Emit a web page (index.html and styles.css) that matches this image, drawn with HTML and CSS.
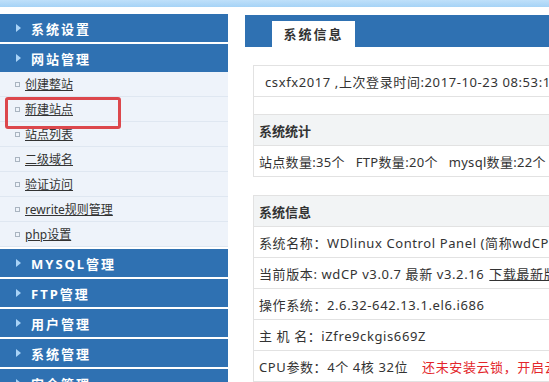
FILE: index.html
```html
<!DOCTYPE html>
<html lang="zh-CN">
<head>
    <meta charset="UTF-8">
    <title>wdCP 系统信息</title>
    <link rel="stylesheet" href="styles.css">
</head>
<body>
    <div class="top-strip"></div>

    <div class="page">
        <div class="sidebar">
            <div class="menu-title"><span class="arrow"></span>系统设置</div>
            <div class="menu-title"><span class="arrow"></span>网站管理</div>
            <ul class="submenu">
                <li><a href="#">创建整站</a></li>
                <li><a href="#">新建站点</a></li>
                <li><a href="#">站点列表</a></li>
                <li><a href="#">二级域名</a></li>
                <li><a href="#">验证访问</a></li>
                <li><a href="#">rewrite规则管理</a></li>
                <li><a href="#">php设置</a></li>
            </ul>
            <div class="menu-title"><span class="arrow"></span>MYSQL管理</div>
            <div class="menu-title"><span class="arrow"></span>FTP管理</div>
            <div class="menu-title"><span class="arrow"></span>用户管理</div>
            <div class="menu-title"><span class="arrow"></span>系统管理</div>
            <div class="menu-title"><span class="arrow"></span>安全管理</div>

            <!-- annotation box from the screenshot -->
            <div class="mark"></div>
        </div>

        <div class="main">
            <div class="tab-bar">
                <div class="tab">系统信息</div>
            </div>

            <div class="box">
                <div class="row login">csxfx2017 ,上次登录时间:2017-10-23 08:53:15</div>
                <div class="blank"></div>
                <div class="row head">系统统计</div>
                <div class="row last stats">站点数量:35个&nbsp;&nbsp; FTP数量:20个&nbsp;&nbsp; mysql数量:22个</div>
            </div>

            <div class="box">
                <div class="row head">系统信息</div>
                <div class="row">系统名称：WDlinux Control Panel (简称wdCP)</div>
                <div class="row">当前版本: wdCP v3.0.7 最新 v3.2.16 <a href="#">下载最新版</a></div>
                <div class="row">操作系统：2.6.32-642.13.1.el6.i686</div>
                <div class="row">主 机 名：iZfre9ckgis669Z</div>
                <div class="row last">CPU参数：4个 4核 32位 <span class="warn">还未安装云锁，开启云锁防护</span></div>
            </div>
        </div>
    </div>
</body>
</html>
```

FILE: styles.css
```css
body {
    margin: 0;
    font-family: "Noto Sans", "Noto Sans CJK SC", sans-serif;
    font-size: 13px;
    color: #333;
    background: #fff;
    overflow: hidden;
}
a {
    color: #333;
}

.top-strip {
    height: 7px;
    background: linear-gradient(#bfe0fa, #a6d3f6);
}

.page {
    display: flex;
    margin-top: 7px;
}

/* left menu */
.sidebar {
    position: relative;
    width: 228px;
    flex-shrink: 0;
}
.menu-title {
    display: flex;
    align-items: center;
    height: 28px;
    margin-top: 2px;
    padding-left: 16px;
    background: #2f71b2;
    color: #fff;
    font-weight: bold;
    font-size: 13px;
    letter-spacing: 2px;
}
.menu-title:first-child {
    margin-top: 0;
}
.arrow {
    width: 0;
    height: 0;
    margin-right: 10px;
    border-top: 4px solid transparent;
    border-bottom: 4px solid transparent;
    border-left: 5px solid #a9d3f7;
}
.submenu {
    list-style: none;
    margin: 0;
    padding: 0;
    background: #eef3fa;
}
.submenu li {
    display: flex;
    align-items: center;
    height: 24px;
    border-bottom: 1px solid #dfe7f1;
    padding-left: 15px;
    font-size: 12px;
}
.submenu li::before {
    content: "";
    width: 3px;
    height: 3px;
    margin-right: 5px;
    border: 1px solid #a9b4c0;
}
.submenu li a {
    color: #333;
}
.mark {
    position: absolute;
    left: 5px;
    top: 83px;
    width: 110px;
    height: 26px;
    border: 3px solid #dc474c;
    border-radius: 3px;
}

/* right side */
.main {
    width: 800px;
    flex-shrink: 0;
    margin-left: 17px;
    padding-top: 1px;
}
.tab-bar {
    height: 32px;
    background: #2f71b2;
    display: flex;
    align-items: flex-end;
}
.tab {
    width: 83px;
    height: 26px;
    margin-left: 27px;
    background: #fff;
    text-align: center;
    line-height: 26px;
    font-size: 13px;
    font-weight: bold;
    letter-spacing: 2px;
    color: #333;
}
.box {
    margin: 18px 0 0 8px;
    border: 1px solid #e2e2e2;
}
.row {
    display: flex;
    align-items: center;
    height: 30px;
    padding-left: 5px;
    border-bottom: 1px solid #e2e2e2;
    letter-spacing: 0.6px;
    white-space: nowrap;
}
.row.login {
    padding-left: 11px;
}
.row.stats {
    letter-spacing: 0.3px;
}
.row.last {
    border-bottom: none;
}
.row.head {
    background: #f2f4f5;
    font-weight: bold;
    letter-spacing: 0;
}
.row a {
    margin-left: 5px;
}
.blank {
    height: 17px;
    border-bottom: 1px solid #e2e2e2;
}
.warn {
    color: #e3262b;
    margin-left: 14px;
}
```
